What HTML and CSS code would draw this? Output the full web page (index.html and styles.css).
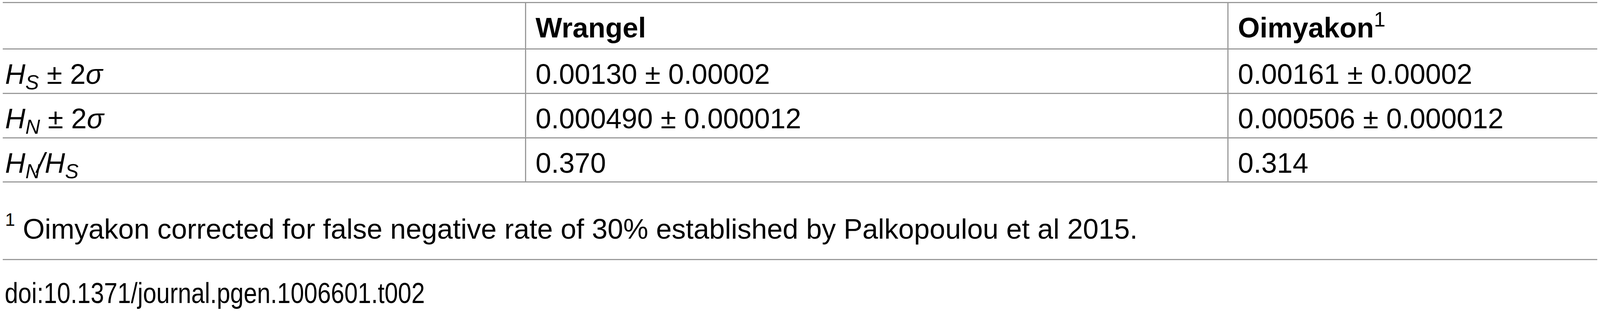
FILE: index.html
```html
<!DOCTYPE html>
<html lang="en">
<head>
<meta charset="utf-8">
<title>Table 2</title>
<link rel="stylesheet" href="styles.css">
</head>
<body>
<div class="page">
  <table class="data">
    <colgroup>
      <col class="col-label">
      <col class="col-a">
      <col class="col-b">
    </colgroup>
    <thead>
      <tr>
        <th class="lab"></th>
        <th>Wrangel</th>
        <th>Oimyakon<sup class="hsup">1</sup></th>
      </tr>
    </thead>
    <tbody>
      <tr>
        <td class="lab"><i>H</i><sub><i>S</i></sub> ± 2<i>σ</i></td>
        <td>0.00130 ± 0.00002</td>
        <td>0.00161 ± 0.00002</td>
      </tr>
      <tr>
        <td class="lab"><i>H</i><sub><i>N</i></sub> ± 2<i>σ</i></td>
        <td>0.000490 ± 0.000012</td>
        <td>0.000506 ± 0.000012</td>
      </tr>
      <tr class="last">
        <td class="lab"><i>H</i><sub><i>N</i></sub><i class="slash">/</i><i>H</i><sub><i>S</i></sub></td>
        <td>0.370</td>
        <td>0.314</td>
      </tr>
    </tbody>
  </table>
  <div class="footnote"><sup class="fsup">1</sup> Oimyakon corrected for false negative rate of 30% established by Palkopoulou et al 2015.</div>
  <div class="doi"><span class="doi-text">doi:10.1371/journal.pgen.1006601.t002</span></div>
</div>
</body>
</html>
```

FILE: styles.css
```css
*, *::before, *::after {
  box-sizing: border-box;
}

html, body {
  margin: 0;
  padding: 0;
  background: #ffffff;
  overflow: hidden;
}

.page {
  padding: 5px 7px 0 7px;
  font-family: "Liberation Sans", Arial, Helvetica, sans-serif;
  font-size: 72px;
  line-height: 83px;
  color: #000;
}

.data {
  border-collapse: separate;
  border-spacing: 0;
  table-layout: fixed;
  width: 100%;
  border-top: 3px solid #9a9a9a;
}

.col-label { width: 1337px; }
.col-a { width: 1798px; }
.col-b { width: auto; }

.data th,
.data td {
  text-align: left;
  vertical-align: top;
  padding: 22px 0 6px 24px;
  border-bottom: 3px solid #9a9a9a;
  border-left: 3px solid #9a9a9a;
  white-space: nowrap;
  font-weight: normal;
  overflow: hidden;
}

.data th {
  font-weight: bold;
  padding-bottom: 11px;
}

.data tr.last td {
  padding-bottom: 5px;
}

.data .lab {
  border-left: none;
  padding-left: 6px;
}

sub, sup {
  line-height: 0;
  font-weight: normal;
}

sub {
  font-size: 52px;
  vertical-align: -14px;
}

.hsup {
  font-size: 53px;
  vertical-align: 28px;
}

.slash {
  margin-left: -8px;
}

.footnote {
  padding: 78px 0 35px 6px;
  border-bottom: 3px solid #9a9a9a;
  white-space: nowrap;
}

.fsup {
  font-size: 46px;
  vertical-align: 33px;
}

.doi {
  padding: 43px 0 0 5px;
  white-space: nowrap;
  font-size: 75px;
  line-height: 83px;
}

.doi-text {
  display: inline-block;
  transform: scaleX(0.824);
  transform-origin: left center;
}
```
